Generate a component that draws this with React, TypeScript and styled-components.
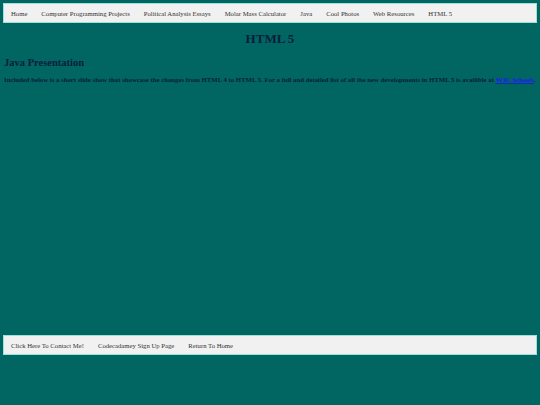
import React from "react";
import styled, { createGlobalStyle } from "styled-components";

const GlobalStyle = createGlobalStyle`
  html, body {
    margin: 0;
    padding: 0;
    background-color: #016562;
    font-family: "Liberation Serif", "Times New Roman", serif;
  }
  body {
    padding: 3px;
    min-height: 405px;
    box-sizing: border-box;
  }
`;

const NavBar = styled.ul`
  list-style: none;
  margin: 0;
  padding: 0;
  height: 18px;
  display: flex;
  align-items: center;
  background-color: #f1f1f1;
  border: 1px solid #9fe0da;
`;

const NavItem = styled.li`
  a {
    display: block;
    padding: 0 7px;
    font-size: 6.7px;
    color: #333;
    text-decoration: none;
  }
`;

const Title = styled.h1`
  margin: 8px 0 0;
  text-align: center;
  font-size: 13px;
  line-height: 15px;
  color: #0a1d3c;
`;

const SubTitle = styled.h2`
  margin: 10px 0 0 1px;
  font-size: 10.5px;
  line-height: 13px;
  color: #0a1d3c;
`;

const Intro = styled.p`
  margin: 6px 0 0 1px;
  font-size: 6.75px;
  font-weight: bold;
  line-height: 9px;
  color: #0a1d3c;
  white-space: nowrap;

  a {
    color: #1a1aee;
  }
`;

const SlideArea = styled.div`
  height: 251px;
`;

const Footer = styled(NavBar)``;

const mainLinks = [
  "Home",
  "Computer Programming Projects",
  "Political Analysis Essays",
  "Molar Mass Calculator",
  "Java",
  "Cool Photos",
  "Web Resources",
  "HTML 5",
];

const footerLinks = ["Click Here To Contact Me!", "Codecadamey Sign Up Page", "Return To Home"];

function App() {
  return (
    <>
      <GlobalStyle />
      <NavBar>
        {mainLinks.map((label) => (
          <NavItem key={label}>
            <a href="#">{label}</a>
          </NavItem>
        ))}
      </NavBar>
      <Title>HTML 5</Title>
      <SubTitle>Java Presentation</SubTitle>
      <Intro>
        Included below is a short slide show that showcase the changes from HTML 4 to HTML 5. For a full and
        detailed list of all the new developments in HTML 5 is availible at <a href="#">W3C Schools</a>.
      </Intro>
      <SlideArea />
      <Footer>
        {footerLinks.map((label) => (
          <NavItem key={label}>
            <a href="#">{label}</a>
          </NavItem>
        ))}
      </Footer>
    </>
  );
}

export default App;
